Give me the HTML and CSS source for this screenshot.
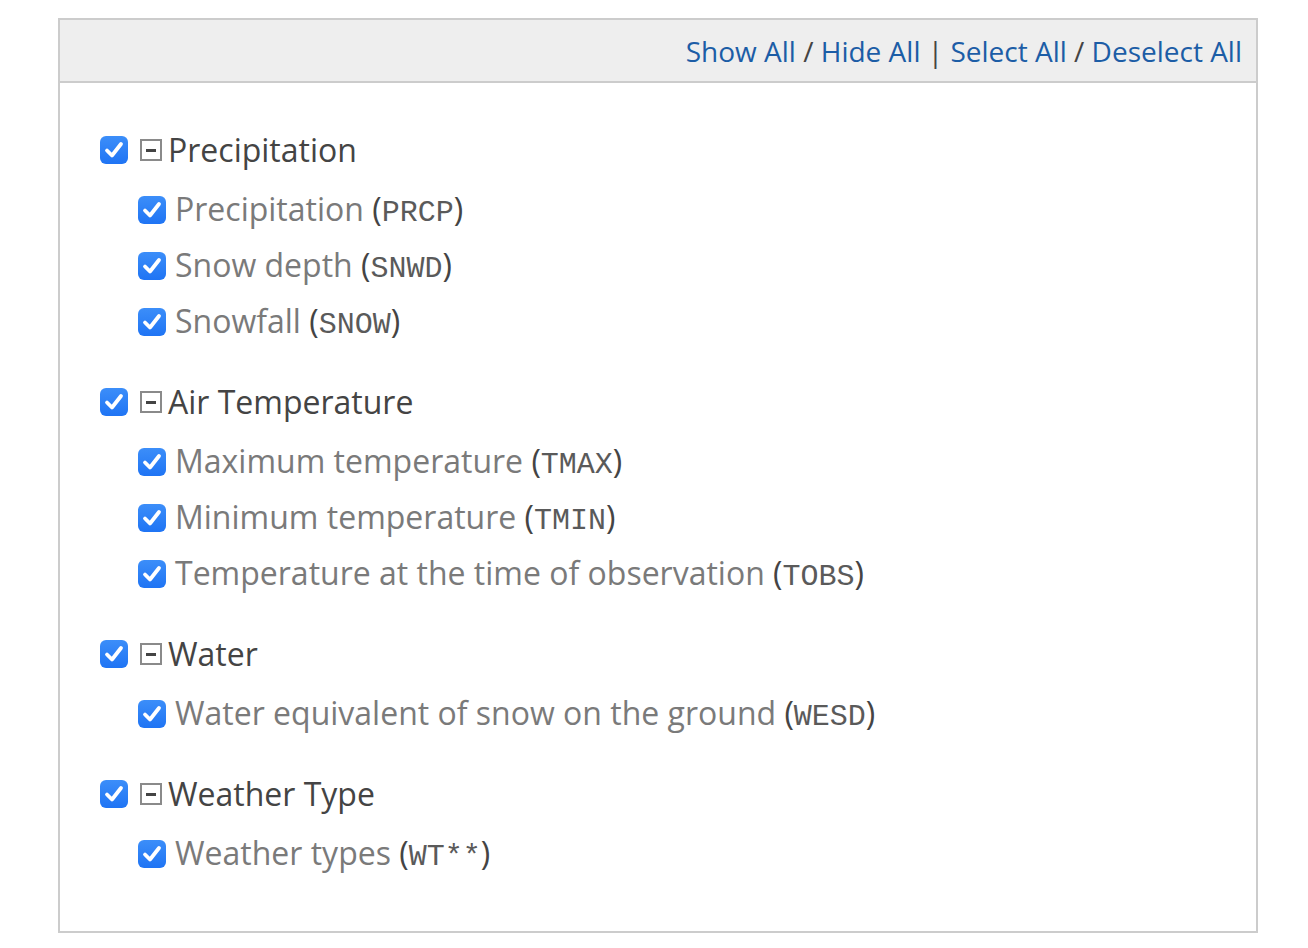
FILE: index.html
```html
<!DOCTYPE html>
<html>
<head>
<meta charset="utf-8">
<link rel="stylesheet" href="styles.css">
</head>
<body>
<div class="panel">
  <div class="panel-head">
    <a href="#">Show All</a> / <a href="#">Hide All</a> | <a href="#">Select All</a> / <a href="#">Deselect All</a>
  </div>
  <div class="panel-body">
    <div class="group">
      <div class="group-row">
        <span class="cb"><svg viewBox="0 0 28 28"><path d="M7 14.5 L12 19.5 L21 8" fill="none" stroke="#fff" stroke-width="3.8" stroke-linecap="round" stroke-linejoin="round"/></svg></span>
        <span class="toggle"><span class="minus"></span></span>
        <span class="group-title">Precipitation</span>
      </div>
      <ul class="items">
        <li class="item"><span class="cb"><svg viewBox="0 0 28 28"><path d="M7 14.5 L12 19.5 L21 8" fill="none" stroke="#fff" stroke-width="3.8" stroke-linecap="round" stroke-linejoin="round"/></svg></span><span class="label">Precipitation <span class="paren">(<code>PRCP</code>)</span></span></li>
        <li class="item"><span class="cb"><svg viewBox="0 0 28 28"><path d="M7 14.5 L12 19.5 L21 8" fill="none" stroke="#fff" stroke-width="3.8" stroke-linecap="round" stroke-linejoin="round"/></svg></span><span class="label">Snow depth <span class="paren">(<code>SNWD</code>)</span></span></li>
        <li class="item"><span class="cb"><svg viewBox="0 0 28 28"><path d="M7 14.5 L12 19.5 L21 8" fill="none" stroke="#fff" stroke-width="3.8" stroke-linecap="round" stroke-linejoin="round"/></svg></span><span class="label">Snowfall <span class="paren">(<code>SNOW</code>)</span></span></li>
      </ul>
    </div>
    <div class="group">
      <div class="group-row">
        <span class="cb"><svg viewBox="0 0 28 28"><path d="M7 14.5 L12 19.5 L21 8" fill="none" stroke="#fff" stroke-width="3.8" stroke-linecap="round" stroke-linejoin="round"/></svg></span>
        <span class="toggle"><span class="minus"></span></span>
        <span class="group-title">Air Temperature</span>
      </div>
      <ul class="items">
        <li class="item"><span class="cb"><svg viewBox="0 0 28 28"><path d="M7 14.5 L12 19.5 L21 8" fill="none" stroke="#fff" stroke-width="3.8" stroke-linecap="round" stroke-linejoin="round"/></svg></span><span class="label">Maximum temperature <span class="paren">(<code>TMAX</code>)</span></span></li>
        <li class="item"><span class="cb"><svg viewBox="0 0 28 28"><path d="M7 14.5 L12 19.5 L21 8" fill="none" stroke="#fff" stroke-width="3.8" stroke-linecap="round" stroke-linejoin="round"/></svg></span><span class="label">Minimum temperature <span class="paren">(<code>TMIN</code>)</span></span></li>
        <li class="item"><span class="cb"><svg viewBox="0 0 28 28"><path d="M7 14.5 L12 19.5 L21 8" fill="none" stroke="#fff" stroke-width="3.8" stroke-linecap="round" stroke-linejoin="round"/></svg></span><span class="label">Temperature at the time of observation <span class="paren">(<code>TOBS</code>)</span></span></li>
      </ul>
    </div>
    <div class="group">
      <div class="group-row">
        <span class="cb"><svg viewBox="0 0 28 28"><path d="M7 14.5 L12 19.5 L21 8" fill="none" stroke="#fff" stroke-width="3.8" stroke-linecap="round" stroke-linejoin="round"/></svg></span>
        <span class="toggle"><span class="minus"></span></span>
        <span class="group-title">Water</span>
      </div>
      <ul class="items">
        <li class="item"><span class="cb"><svg viewBox="0 0 28 28"><path d="M7 14.5 L12 19.5 L21 8" fill="none" stroke="#fff" stroke-width="3.8" stroke-linecap="round" stroke-linejoin="round"/></svg></span><span class="label">Water equivalent of snow on the ground <span class="paren">(<code>WESD</code>)</span></span></li>
      </ul>
    </div>
    <div class="group">
      <div class="group-row">
        <span class="cb"><svg viewBox="0 0 28 28"><path d="M7 14.5 L12 19.5 L21 8" fill="none" stroke="#fff" stroke-width="3.8" stroke-linecap="round" stroke-linejoin="round"/></svg></span>
        <span class="toggle"><span class="minus"></span></span>
        <span class="group-title">Weather Type</span>
      </div>
      <ul class="items">
        <li class="item"><span class="cb"><svg viewBox="0 0 28 28"><path d="M7 14.5 L12 19.5 L21 8" fill="none" stroke="#fff" stroke-width="3.8" stroke-linecap="round" stroke-linejoin="round"/></svg></span><span class="label">Weather types <span class="paren">(<code>WT**</code>)</span></span></li>
      </ul>
    </div>
  </div>
</div>
</body>
</html>
```

FILE: styles.css
```css
html, body {
  margin: 0;
  padding: 0;
  background: #fff;
}
body {
  font-family: "Open Sans", "Liberation Sans", sans-serif;
  color: #444;
}
.panel {
  margin: 18px 0 0 58px;
  width: 1200px;
  box-sizing: border-box;
  border: 2px solid #cccccc;
}
.panel-head {
  background: #eeeeee;
  border-bottom: 2px solid #cccccc;
  height: 61px;
  display: flex;
  align-items: center;
  justify-content: flex-end;
  padding-right: 14px;
  font-size: 28px;
  color: #444;
  white-space: pre;
}
.panel-head a {
  color: #1c5da6;
  text-decoration: none;
}
.panel-body {
  padding: 39px 0 25px 40px;
}
.group {
  margin-bottom: 23px;
}
.group-row {
  display: flex;
  align-items: center;
  height: 56px;
}
.cb {
  width: 28px;
  height: 28px;
  border-radius: 6px;
  background: linear-gradient(#3c8ef9, #1f74f4);
  display: flex;
  align-items: center;
  justify-content: center;
  flex: none;
}
.cb svg {
  width: 28px;
  height: 28px;
  display: block;
}
.toggle {
  width: 22px;
  height: 22px;
  box-sizing: border-box;
  border: 2px solid #8a8a8a;
  margin-left: 12px;
  margin-right: 6px;
  display: flex;
  align-items: center;
  justify-content: center;
  flex: none;
}
.minus {
  width: 10px;
  height: 3px;
  background: #444;
}
.group-title {
  font-size: 32px;
  color: #444;
  line-height: 56px;
}
.items {
  list-style: none;
  margin: 5px 0 0 38px;
  padding: 0;
}
.item {
  display: flex;
  align-items: center;
  height: 56px;
}
.item .cb {
  margin-right: 9px;
  margin-top: -3px;
}
.label {
  font-size: 32px;
  color: #7a7a7a;
  line-height: 56px;
  white-space: nowrap;
}
.paren {
  color: #444;
}
code {
  font-family: "Liberation Mono", "Courier New", monospace;
  font-size: 30px;
  color: #5a5a5a;
}
```
